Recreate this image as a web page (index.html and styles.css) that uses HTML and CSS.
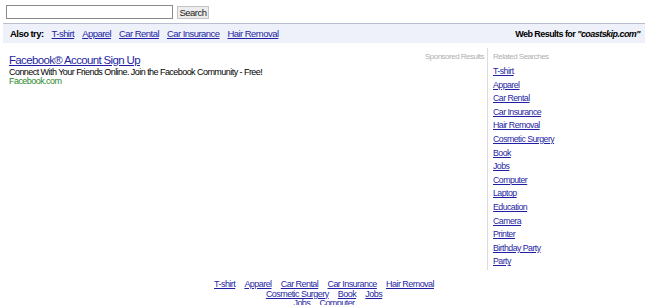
FILE: index.html
```html
<!DOCTYPE html>
<html>
<head>
<meta charset="utf-8">
<link rel="stylesheet" href="styles.css">
</head>
<body>
<div class="page">
  <form class="search">
    <input class="search-input" type="text">
    <button class="search-btn" type="button">Search</button>
  </form>
  <div class="bar">
    <div class="also">
      <b>Also try:</b>
      <a href="#">T-shirt</a>
      <a href="#">Apparel</a>
      <a href="#">Car Rental</a>
      <a href="#">Car Insurance</a>
      <a href="#">Hair Removal</a>
    </div>
    <div class="web">Web Results for <i>"coastskip.com"</i></div>
  </div>
  <div class="main">
    <div class="ads">
      <div class="sponsored">Sponsored Results</div>
      <div class="ad">
        <a class="ad-title" href="#">Facebook® Account Sign Up</a>
        <div class="ad-desc">Connect With Your Friends Online. Join the Facebook Community - Free!</div>
        <div class="ad-url">Facebook.com</div>
      </div>
    </div>
    <div class="related">
      <div class="related-head">Related Searches</div>
      <ul class="related-list">
        <li><a href="#">T-shirt</a></li>
        <li><a href="#">Apparel</a></li>
        <li><a href="#">Car Rental</a></li>
        <li><a href="#">Car Insurance</a></li>
        <li><a href="#">Hair Removal</a></li>
        <li><a href="#">Cosmetic Surgery</a></li>
        <li><a href="#">Book</a></li>
        <li><a href="#">Jobs</a></li>
        <li><a href="#">Computer</a></li>
        <li><a href="#">Laptop</a></li>
        <li><a href="#">Education</a></li>
        <li><a href="#">Camera</a></li>
        <li><a href="#">Printer</a></li>
        <li><a href="#">Birthday Party</a></li>
        <li><a href="#">Party</a></li>
      </ul>
    </div>
  </div>
  <div class="footer">
    <div class="frow">
      <a href="#">T-shirt</a><a href="#">Apparel</a><a href="#">Car Rental</a><a href="#">Car Insurance</a><a href="#">Hair Removal</a>
    </div>
    <div class="frow">
      <a href="#">Cosmetic Surgery</a><a href="#">Book</a><a href="#">Jobs</a>
    </div>
    <div class="frow">
      <a href="#">Jobs</a><a href="#">Computer</a>
    </div>
  </div>
</div>
</body>
</html>
```
FILE: styles.css
```css
html, body {
  margin: 0;
  padding: 0;
  background: #fff;
}
body {
  font-family: "Liberation Sans", Arial, sans-serif;
  font-size: 9px;
  letter-spacing: -0.55px;
  color: #000;
}
a {
  color: #1f1fa3;
  text-decoration: underline;
}
.page {
  padding: 5px 5px 0 3px;
}
.search {
  display: flex;
  align-items: center;
  gap: 4px;
  margin: 0 0 0 3px;
  height: 14px;
}
.search-input {
  box-sizing: border-box;
  width: 167px;
  height: 14px;
  border: 1px solid #8a8a8a;
  padding: 0;
  margin: 0;
}
.search-btn {
  box-sizing: border-box;
  width: 32px;
  height: 13px;
  margin: 1px 0 0 0;
  padding: 0;
  font-family: "Liberation Sans", Arial, sans-serif;
  font-size: 9.5px;
  letter-spacing: -0.5px;
  line-height: 11px;
  background: #ededed;
  border: 1px solid #c4c4c4;
  color: #222;
}
.bar {
  margin-top: 4px;
  display: flex;
  justify-content: space-between;
  align-items: center;
  height: 20px;
  box-sizing: border-box;
  background: #eef1f9;
  border-top: 1px solid #b9bfcf;
  padding: 0 5px 0 7px;
}
.also {
  display: flex;
  gap: 8px;
  font-size: 9.5px;
}
.web {
  font-weight: bold;
}
.main {
  display: flex;
  margin-top: 5px;
}
.ads {
  flex: 1;
  padding: 4px 3px 0 6px;
  min-height: 218px;
}
.sponsored {
  float: right;
  font-size: 8px;
  letter-spacing: -0.5px;
  color: #b0b0b0;
  line-height: 10px;
}
.ad-title {
  display: inline-block;
  font-size: 11.5px;
  letter-spacing: -0.65px;
  line-height: 12px;
  margin-top: 2px;
}
.ad-desc {
  line-height: 9px;
  margin-top: 2px;
}
.ad-url {
  line-height: 9px;
  color: #2d8a2d;
}
.related {
  width: 152px;
  border-left: 1px solid #dcdcdc;
  padding: 4px 0 0 5px;
}
.related-head {
  font-size: 8px;
  letter-spacing: -0.5px;
  color: #b0b0b0;
  line-height: 10px;
}
.related-list {
  list-style: none;
  margin: 3px 0 0 0;
  padding: 0;
}
.related-list li {
  font-size: 8.8px;
  line-height: 13.6px;
}
.footer {
  margin-top: 10px;
  text-align: center;
  line-height: 9.6px;
}
.frow a {
  margin: 0 4.6px;
}
```
